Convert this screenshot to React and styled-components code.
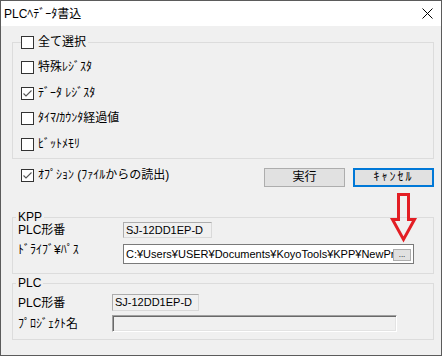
import React from 'react';
import styled, { createGlobalStyle } from 'styled-components';

const Global = createGlobalStyle`
  html, body { margin: 0; padding: 0; background: #ffffff; }
  body {
    font-family: "Liberation Sans", "Noto Sans CJK JP", sans-serif;
    font-size: 12px;
    color: #000;
  }
  *, *::before, *::after { box-sizing: border-box; }
`;

const Window = styled.div`
  position: relative;
  width: 442px;
  height: 356px;
  border: 1px solid #5b5b5b;
  background: #f0f0f0;
  display: flex;
  flex-direction: column;
`;

const TitleBar = styled.div`
  height: 25px;
  flex: none;
  background: #ffffff;
  display: flex;
  align-items: center;
  justify-content: space-between;
  padding: 0 8px 0 3px;
`;

const Title = styled.span`
  font-size: 12px;
  line-height: 14px;
`;

const Body = styled.div`
  flex: 1;
  display: flex;
  flex-direction: column;
  padding: 0 7px 0 11px;
`;

const Group = styled.fieldset`
  margin: ${p => p.$mt}px 0 0;
  padding: ${p => p.$pad};
  border: 1px solid #dcdcdc;
  min-width: 0;
  display: flex;
  flex-direction: column;
`;

const CheckLegend = styled.legend`
  padding: 0 2px 0 0;
  height: 13px;
  display: flex;
  align-items: center;
`;

const TextLegend = styled.legend`
  padding: 0 2px;
  margin-left: -2px;
  font-size: 12px;
  line-height: 10px;
`;

const CheckRow = styled.div`
  height: 25.5px;
  display: flex;
  align-items: center;
`;

const CheckLabel = styled.label`
  display: inline-flex;
  align-items: center;
  gap: 4px;
  font-size: 12px;
  line-height: 13px;
  white-space: nowrap;
`;

const Box = styled.span`
  width: 13px;
  height: 13px;
  flex: none;
  border: 1px solid #333333;
  background: #ffffff;
  display: inline-flex;
  align-items: center;
  justify-content: center;
`;

const ActionRow = styled.div`
  margin-top: 9px;
  height: 19px;
  display: flex;
  align-items: flex-start;
`;

const OptionWrap = styled.div`
  margin: 1px 0 0 9px;
`;

const Buttons = styled.div`
  margin-left: auto;
  display: flex;
  gap: 8px;
`;

const Button = styled.button`
  width: 81px;
  height: 19px;
  padding: 0;
  font-family: inherit;
  font-size: 12px;
  line-height: 15px;
  letter-spacing: ${p => (p.$wide ? '2px' : '0')};
  color: #000;
  background: #e1e1e1;
  border: ${p => (p.$default ? '2px solid #0078d7' : '1px solid #adadad')};
`;

const FieldRow = styled.div`
  display: flex;
  align-items: ${p => p.$align || 'center'};
  margin-top: ${p => p.$mt || 0}px;
  height: ${p => p.$h}px;
`;

const FieldLabel = styled.span`
  width: ${p => p.$w}px;
  flex: none;
  font-size: 12px;
  line-height: 12px;
  white-space: nowrap;
  margin-top: ${p => p.$mt || 0}px;
`;

const ReadOnlyBox = styled.div`
  width: ${p => p.$w}px;
  height: ${p => p.$h}px;
  border: 1px solid;
  border-color: #adadad #d9d9d9 #d9d9d9 #adadad;
  background: #f0f0f0;
  padding-left: 2px;
  font-size: 11px;
  line-height: ${p => p.$h - 2}px;
  white-space: nowrap;
  overflow: hidden;
`;

const SunkenBox = styled.div`
  width: ${p => p.$w}px;
  height: ${p => p.$h}px;
  border: 1px solid;
  border-color: #a0a0a0 #ffffff #ffffff #a0a0a0;
  box-shadow: inset 1px 1px 0 #696969, inset -1px -1px 0 #e3e3e3;
  background: #f0f0f0;
`;

const PathBox = styled.div`
  width: ${p => p.$w}px;
  height: ${p => p.$h}px;
  border: 1px solid #7a7a7a;
  background: #ffffff;
  display: flex;
  align-items: center;
  overflow: hidden;
`;

const PathText = styled.span`
  flex: 1;
  min-width: 0;
  overflow: hidden;
  white-space: nowrap;
  text-overflow: clip;
  padding-left: 2px;
  font-size: 11px;
  line-height: 14px;
`;

const BrowseButton = styled.button`
  flex: none;
  width: 18px;
  height: 12px;
  margin: 2px 2px 0 0;
  padding: 0;
  border: 1px solid #adadad;
  background: #e1e1e1;
  font-family: inherit;
  font-size: 8px;
  line-height: 8px;
  color: #000;
`;

const Arrow = styled.svg`
  position: absolute;
  left: 388px;
  top: 190px;
  width: 30px;
  height: 55px;
  pointer-events: none;
`;

function Check({ checked, label }) {
  return (
    <CheckLabel>
      <Box>
        {checked && (
          <svg width="11" height="11" viewBox="0 0 11 11">
            <polyline points="1.5,5.5 4,8 9.5,2.5" fill="none" stroke="#555555" strokeWidth="1.1" />
          </svg>
        )}
      </Box>
      <span>{label}</span>
    </CheckLabel>
  );
}

export default function App() {
  return (
    <>
      <Global />
      <Window>
        <TitleBar>
          <Title>PLCﾍﾃﾞｰﾀ書込</Title>
          <svg width="11" height="11" viewBox="0 0 11 11">
            <path d="M0.5 0.5 L10.5 10.5 M10.5 0.5 L0.5 10.5" stroke="#000" strokeWidth="1" />
          </svg>
        </TitleBar>
        <Body>
          <Group $mt={10} $pad="6px 8px 1px 8px">
            <CheckLegend>
              <Check label="全て選択" />
            </CheckLegend>
            <CheckRow><Check label="特殊ﾚｼﾞｽﾀ" /></CheckRow>
            <CheckRow><Check checked label="ﾃﾞｰﾀ ﾚｼﾞｽﾀ" /></CheckRow>
            <CheckRow><Check label="ﾀｲﾏ/ｶｳﾝﾀ経過値" /></CheckRow>
            <CheckRow><Check label="ﾋﾞｯﾄﾒﾓﾘ" /></CheckRow>
          </Group>

          <ActionRow>
            <OptionWrap>
              <Check checked label="ｵﾌﾟｼｮﾝ (ﾌｧｲﾙからの読出)" />
            </OptionWrap>
            <Buttons>
              <Button>実行</Button>
              <Button $default $wide>ｷｬﾝｾﾙ</Button>
            </Buttons>
          </ActionRow>

          <Group $mt={25} $pad="0 5px 9px 5px">
            <TextLegend>KPP</TextLegend>
            <FieldRow $h={16}>
              <FieldLabel $w={105}>PLC形番</FieldLabel>
              <ReadOnlyBox $w={89} $h={16}>SJ-12DD1EP-D</ReadOnlyBox>
            </FieldRow>
            <FieldRow $h={20} $mt={6} $align="flex-start">
              <FieldLabel $w={105} $mt={0}>ﾄﾞﾗｲﾌﾞ¥ﾊﾟｽ</FieldLabel>
              <PathBox $w={291} $h={20}>
                <PathText>C:¥Users¥USER¥Documents¥KoyoTools¥KPP¥NewPro</PathText>
                <BrowseButton>...</BrowseButton>
              </PathBox>
            </FieldRow>
          </Group>

          <Group $mt={4} $pad="6px 5px 7px 5px">
            <TextLegend>PLC</TextLegend>
            <FieldRow $h={17}>
              <FieldLabel $w={94}>PLC形番</FieldLabel>
              <ReadOnlyBox $w={87} $h={17}>SJ-12DD1EP-D</ReadOnlyBox>
            </FieldRow>
            <FieldRow $h={17} $mt={4}>
              <FieldLabel $w={94}>ﾌﾟﾛｼﾞｪｸﾄ名</FieldLabel>
              <SunkenBox $w={285} $h={17} />
            </FieldRow>
          </Group>
        </Body>
        <Arrow viewBox="0 0 30 55">
          <polygon
            points="9.5,3.5 19.5,3.5 19.5,28.5 25.5,28.5 14.5,48.5 3.5,28.5 9.5,28.5"
            fill="none"
            stroke="#e31e24"
            strokeWidth="3"
            strokeLinejoin="miter"
          />
        </Arrow>
      </Window>
    </>
  );
}
